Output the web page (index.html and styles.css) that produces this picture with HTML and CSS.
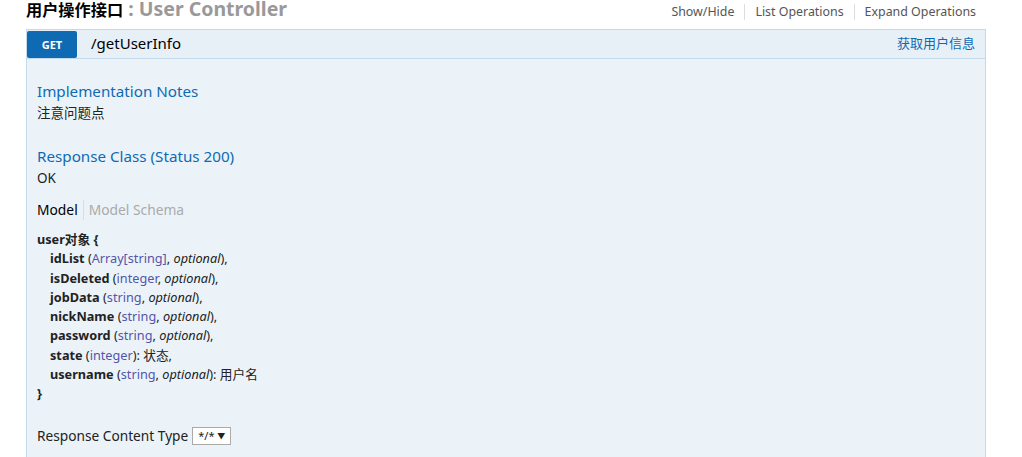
FILE: index.html
```html
<!DOCTYPE html>
<html lang="zh-CN">
<head>
    <meta charset="UTF-8">
    <title>用户操作接口</title>
    <link rel="stylesheet" href="styles.css">
</head>
<body>
    <div class="container">
        <div class="resource-heading">
            <h2><a class="res-name" href="#">用户操作接口</a> : User Controller</h2>
            <ul class="options">
                <li><a href="#">Show/Hide</a></li>
                <li><a href="#">List Operations</a></li>
                <li><a href="#">Expand Operations</a></li>
            </ul>
        </div>

        <div class="operation">
            <div class="op-heading">
                <span class="http-method">GET</span>
                <span class="path">/getUserInfo</span>
                <span class="summary">获取用户信息</span>
            </div>

            <div class="op-content">
                <h4>Implementation Notes</h4>
                <p class="markdown">注意问题点</p>

                <h4>Response Class (Status 200)</h4>
                <p class="markdown">OK</p>

                <ul class="signature-nav">
                    <li class="selected">Model</li>
                    <li>Model Schema</li>
                </ul>

                <div class="model">
                    <div><b>user对象 {</b></div>
                    <div class="prop"><b>idList</b> (<span class="type">Array[string]</span>, <i>optional</i>),</div>
                    <div class="prop"><b>isDeleted</b> (<span class="type">integer</span>, <i>optional</i>),</div>
                    <div class="prop"><b>jobData</b> (<span class="type">string</span>, <i>optional</i>),</div>
                    <div class="prop"><b>nickName</b> (<span class="type">string</span>, <i>optional</i>),</div>
                    <div class="prop"><b>password</b> (<span class="type">string</span>, <i>optional</i>),</div>
                    <div class="prop"><b>state</b> (<span class="type">integer</span>): 状态,</div>
                    <div class="prop"><b>username</b> (<span class="type">string</span>, <i>optional</i>): 用户名</div>
                    <div><b>}</b></div>
                </div>

                <div class="content-type">
                    Response Content Type
                    <span class="select"><span>*/*</span><span class="arrow">▼</span></span>
                </div>
            </div>
        </div>
    </div>
</body>
</html>
```

FILE: styles.css
```css
body {
    margin: 0;
    font-family: "Noto Sans", "Noto Sans CJK SC", sans-serif;
    font-size: 14px;
    color: #222;
    background: white;
    overflow: hidden;
}

a {
    text-decoration: none;
}

.container {
    width: 960px;
    margin-left: 26px;
}

.resource-heading {
    display: flex;
    justify-content: space-between;
    align-items: center;
    height: 22px;
    margin-top: -2px;
    margin-bottom: 9px;
}

.resource-heading h2 {
    margin: 0;
    font-size: 19.5px;
    font-weight: bold;
    color: #999;
    line-height: 22px;
}

.res-name {
    color: #000;
    font-size: 16.2px;
}

.options {
    display: flex;
    list-style: none;
    margin: 0;
    padding: 0;
    margin-top: 6px;
}

.options li {
    padding: 0 10px;
    border-right: 1px solid #ddd;
    font-size: 12.4px;
    line-height: 16px;
}

.options li:last-child {
    border-right: none;
}

.options a {
    color: #555;
}

.operation {
    border: 1px solid #c3d9ec;
}

.op-heading {
    display: flex;
    align-items: center;
    height: 28px;
    background: #e7f0f7;
    border-bottom: 1px solid #c3d9ec;
}

.http-method {
    width: 50px;
    height: 27px;
    background: #0f6ab4;
    color: white;
    font-size: 11px;
    font-weight: bold;
    display: flex;
    align-items: center;
    justify-content: center;
    border-radius: 2px;
}

.path {
    padding-left: 14px;
    padding-bottom: 3px;
    font-size: 15px;
    color: #000;
}

.summary {
    margin-left: auto;
    padding-right: 10px;
    padding-bottom: 3px;
    font-size: 13px;
    color: #0f6ab4;
}

.op-content {
    background: #ebf3f9;
    padding: 10px 10px 20px;
}

.op-content h4 {
    margin: 0;
    padding-top: 12px;
    font-size: 15.2px;
    font-weight: normal;
    line-height: 20px;
    color: #0f6ab4;
}

.markdown {
    margin: 2px 0 23px;
    line-height: 20px;
    font-size: 13.5px;
}

.op-content h4 + .markdown + h4 {
    padding-top: 0;
}

.markdown + .signature-nav {
    margin-top: -11px;
}

.signature-nav {
    display: flex;
    list-style: none;
    margin: 0 0 10px;
    padding: 0;
    line-height: 20px;
    font-size: 13.8px;
}

.signature-nav li {
    padding: 0 5px;
    color: #aaa;
}

.signature-nav li:first-child {
    padding-left: 0;
    border-right: 1px solid #ddd;
}

.signature-nav .selected {
    color: #000;
}

.model {
    font-size: 12.7px;
    line-height: 19.3px;
}

.prop {
    padding-left: 13px;
}

.type {
    color: #55a;
}

.content-type {
    margin-top: 22px;
    display: flex;
    align-items: center;
    gap: 4px;
    line-height: 20px;
    font-size: 13.7px;
}

.select {
    display: inline-flex;
    align-items: center;
    justify-content: space-between;
    box-sizing: border-box;
    width: 39px;
    height: 18px;
    padding: 0 5px;
    background: white;
    border: 1px solid #aaa;
    font-size: 11px;
}

.arrow {
    font-size: 8px;
}
```
